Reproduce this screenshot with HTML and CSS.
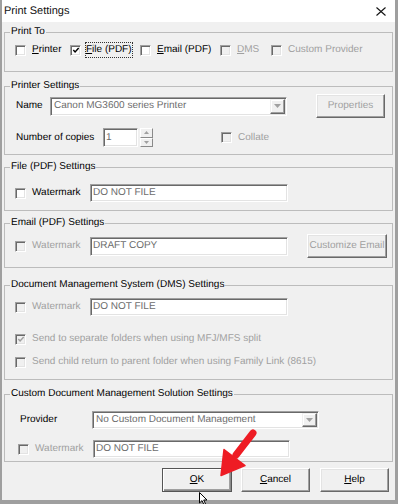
FILE: index.html
```html
<!DOCTYPE html>
<html>
<head>
<meta charset="utf-8">
<title>Print Settings</title>
<link rel="stylesheet" href="styles.css">
</head>
<body>
<div class="window">
  <div class="titlebar">
    <span class="title">Print Settings</span>
    <svg class="close" width="10" height="9" viewBox="0 0 10 9"><path d="M0.5 0.5 L9.5 8.5 M9.5 0.5 L0.5 8.5" stroke="#111" stroke-width="1.1" fill="none"/></svg>
  </div>

  <div class="content">
    <fieldset class="group g-printto">
      <legend>Print To</legend>
      <div class="row printto-row">
        <label class="check"><span class="cb"></span><span><u>P</u>rinter</span></label>
        <label class="check focus"><span class="cb"><svg class="tick" width="9" height="9" viewBox="0 0 9 9"><path d="M1.5 4 L3.5 6.2 L7.5 1.8" stroke="#000" stroke-width="1.6" fill="none"/></svg></span><span class="focus-rect"><u>F</u>ile (PDF)</span></label>
        <label class="check"><span class="cb"></span><span><u>E</u>mail (PDF)</span></label>
        <label class="check disabled"><span class="cb"></span><span><u>D</u>MS</span></label>
        <label class="check disabled"><span class="cb"></span><span>Custom Provider</span></label>
      </div>
    </fieldset>

    <fieldset class="group g-printer">
      <legend>Printer Settings</legend>
      <div class="row name-row">
        <span class="lbl name-lbl">Name</span>
        <div class="field select printer-select">
          <span class="select-text">Canon MG3600 series Printer</span>
          <span class="drop"><svg width="7" height="4" viewBox="0 0 7 4"><path d="M0 0 H7 L3.5 4 Z" fill="#a0a0a0"/></svg></span>
        </div>
        <span class="btn disabled props-btn">Properties</span>
      </div>
      <div class="row copies-row">
        <span class="lbl copies-lbl">Number of copies</span>
        <div class="field copies">1</div>
        <div class="spin">
          <span class="spin-btn"><svg width="5" height="3" viewBox="0 0 5 3"><path d="M0 3 H5 L2.5 0 Z" fill="#a0a0a0"/></svg></span>
          <span class="spin-btn"><svg width="5" height="3" viewBox="0 0 5 3"><path d="M0 0 H5 L2.5 3 Z" fill="#a0a0a0"/></svg></span>
        </div>
        <label class="check disabled collate"><span class="cb"></span><span>Collate</span></label>
      </div>
    </fieldset>

    <fieldset class="group g-file">
      <legend>File (PDF) Settings</legend>
      <div class="row wm-row">
        <label class="check wm-check"><span class="cb"></span><span>Watermark</span></label>
        <div class="field wm-field">DO NOT FILE</div>
      </div>
    </fieldset>

    <fieldset class="group g-email">
      <legend>Email (PDF) Settings</legend>
      <div class="row email-row">
        <label class="check disabled wm-check"><span class="cb"></span><span>Watermark</span></label>
        <div class="field wm-field email-field">DRAFT COPY</div>
        <span class="btn disabled customize-btn">Customize Email</span>
      </div>
    </fieldset>

    <fieldset class="group g-dms">
      <legend>Document Management System (DMS) Settings</legend>
      <div class="row wm-row dms-wm">
        <label class="check disabled wm-check"><span class="cb"></span><span>Watermark</span></label>
        <div class="field wm-field">DO NOT FILE</div>
      </div>
      <div class="row opt-row opt-first">
        <label class="check disabled"><span class="cb"><svg class="tick" width="9" height="9" viewBox="0 0 9 9"><path d="M1.5 4 L3.5 6.2 L7.5 1.8" stroke="#a0a0a0" stroke-width="1.6" fill="none"/></svg></span><span>Send to separate folders when using MFJ/MFS split</span></label>
      </div>
      <div class="row opt-row opt-second">
        <label class="check disabled"><span class="cb"></span><span>Send child return to parent folder when using Family Link (8615)</span></label>
      </div>
    </fieldset>

    <fieldset class="group g-custom">
      <legend>Custom Document Management Solution Settings</legend>
      <div class="row provider-row">
        <span class="lbl provider-lbl">Provider</span>
        <div class="field select provider-select">
          <span class="select-text">No Custom Document Management</span>
          <span class="drop"><svg width="7" height="4" viewBox="0 0 7 4"><path d="M0 0 H7 L3.5 4 Z" fill="#a0a0a0"/></svg></span>
        </div>
      </div>
      <div class="row custom-wm-row">
        <label class="check disabled wm-check"><span class="cb"></span><span>Watermark</span></label>
        <div class="field custom-wm-field">DO NOT FILE</div>
      </div>
    </fieldset>

    <div class="buttons">
      <span class="btn default ok-btn"><u>O</u>K</span>
      <span class="btn cancel-btn"><u>C</u>ancel</span>
      <span class="btn help-btn"><u>H</u>elp</span>
    </div>
  </div>

  <svg class="red-arrow" width="50" height="56" viewBox="0 0 50 56">
    <path d="M43 8 L26 30" stroke="#ee1c24" stroke-width="7" stroke-linecap="round" fill="none"/>
    <path d="M11 50.5 L14 24.6 L35 40.6 Z" fill="#ee1c24" stroke="#ee1c24" stroke-width="1.5" stroke-linejoin="round"/>
  </svg>
  <svg class="cursor" width="10" height="14" viewBox="0 0 10 14">
    <path d="M0.5 0.5 L0.5 11 L3 8.6 L4.9 12.6 L6.5 11.9 L4.7 8 L8 8 Z" fill="#fff" stroke="#000" stroke-width="1" stroke-linejoin="round"/>
  </svg>
</div>
</body>
</html>
```

FILE: styles.css
```css
* {
  box-sizing: border-box;
}

html,
body {
  margin: 0;
  padding: 0;
}

body {
  width: 398px;
  height: 504px;
  overflow: hidden;
  background: #9f9f9f;
  font-family: "Liberation Sans", Arial, sans-serif;
  font-size: 10px;
  line-height: 12px;
  color: #000;
  text-rendering: geometricPrecision;
}

.window {
  position: relative;
  margin: 0 3px 0 2px;
  height: 500px;
  background: #f0f0f0;
}

/* Title bar */
.titlebar {
  height: 22px;
  background: #fff;
  display: flex;
  align-items: center;
  justify-content: space-between;
  padding: 0 9px 0 2px;
}

.title {
  font-size: 11px;
  color: #111;
}

.close {
  display: block;
}

/* Content */
.content {
  padding: 4px 2px 8px 2px;
}

.group {
  margin: 0;
  padding: 0;
  min-width: 0;
  border: 1px solid #bcbcbc;
}

.group legend {
  margin-left: 5px;
  padding: 0 1px;
  line-height: 12px;
}

.g-printto { height: 46px; }
.g-printer { height: 75px; margin-top: 8px; }
.g-file    { height: 50px; margin-top: 6px; }
.g-email   { height: 51px; margin-top: 6px; }
.g-dms     { height: 101px; margin-top: 11px; }
.g-custom  { height: 74px; margin-top: 8px; }

.row {
  display: flex;
  align-items: center;
}

/* Checkboxes */
.check {
  display: flex;
  align-items: center;
  gap: 6px;
  white-space: nowrap;
}

.cb {
  width: 11px;
  height: 11px;
  flex: none;
  display: flex;
  align-items: center;
  justify-content: center;
  background: #fff;
  border: 1px solid;
  border-color: #a0a0a0 #fff #fff #a0a0a0;
  box-shadow: inset 1px 1px 0 #696969, inset -1px -1px 0 #e3e3e3;
}

.check.disabled {
  color: #a0a0a0;
}

.check.disabled .cb {
  background: #f0f0f0;
}

.tick {
  display: block;
  margin: 1px 0 0 1px;
}

.check.focus {
  gap: 4px;
}

.focus-rect {
  padding: 2px 1px;
  outline: 1px dotted #333;
  outline-offset: -1px;
}

/* Print To */
.printto-row {
  display: grid;
  grid-template-columns: 55px 70px 80px 51px auto;
  align-items: center;
  height: 16px;
  margin-top: 4px;
  padding-left: 10px;
}

/* Sunken fields */
.field {
  display: flex;
  align-items: center;
  background: #fff;
  border: 1px solid;
  border-color: #a0a0a0 #fff #fff #a0a0a0;
  box-shadow: inset 1px 1px 0 #696969, inset -1px -1px 0 #e3e3e3;
  color: #6d6d6d;
  padding: 0 2px;
  white-space: nowrap;
}

.select {
  justify-content: space-between;
  padding: 0 1px 0 3px;
}

.drop {
  width: 15px;
  height: 15px;
  display: flex;
  align-items: center;
  justify-content: center;
  background: #f0f0f0;
  border: 1px solid;
  border-color: #f0f0f0 #696969 #696969 #f0f0f0;
  box-shadow: inset -1px -1px 0 #a0a0a0, inset 1px 1px 0 #fff;
}

.lbl {
  white-space: nowrap;
  flex: none;
}

/* Buttons */
.btn {
  display: flex;
  align-items: center;
  justify-content: center;
  height: 24px;
  background: #f0f0f0;
  border: 1px solid;
  border-color: #fff #696969 #696969 #fff;
  box-shadow: inset -1px -1px 0 #a0a0a0, inset 1px 1px 0 #e3e3e3;
  white-space: nowrap;
}

.btn.disabled {
  color: #a0a0a0;
}

.btn.default {
  border-color: #555;
  box-shadow: inset 1px 1px 0 #fff, inset -1px -1px 0 #8a8a8a, inset -2px -2px 0 #a0a0a0;
}

/* Printer Settings */
.name-row {
  height: 24px;
  margin-top: 2px;
  padding-left: 11px;
}

.name-lbl {
  width: 34px;
}

.printer-select {
  width: 237px;
  height: 19px;
}

.props-btn {
  width: 69px;
  margin-left: 29px;
}

.copies-row {
  height: 19px;
  margin-top: 10px;
  padding-left: 11px;
}

.copies-lbl {
  width: 87px;
}

.copies {
  width: 35px;
  height: 19px;
}

.spin {
  width: 13px;
  height: 19px;
  margin-left: 2px;
  display: flex;
  flex-direction: column;
}

.spin-btn {
  flex: 1;
  display: flex;
  align-items: center;
  justify-content: center;
  background: #f0f0f0;
  border: 1px solid;
  border-color: #fff #8a8a8a #8a8a8a #fff;
}

.collate {
  margin-left: 68px;
}

/* Watermark rows */
.wm-row {
  height: 18px;
  margin-top: 11px;
  padding-left: 10px;
}

.wm-check {
  width: 75px;
}

.wm-field {
  width: 198px;
  height: 18px;
}

.email-row {
  height: 24px;
  margin-top: 5px;
  padding-left: 10px;
}

.email-field {
  height: 19px;
}

.customize-btn {
  width: 80px;
  margin-left: 19px;
}

/* DMS */
.dms-wm {
  margin-top: 7px;
}

.opt-row {
  height: 16px;
  padding-left: 10px;
}

.opt-first {
  margin-top: 15px;
}

.opt-second {
  margin-top: 7px;
}

/* Custom */
.provider-row {
  height: 18px;
  margin-top: 11px;
  padding-left: 15px;
}

.provider-lbl {
  width: 72px;
}

.provider-select {
  width: 227px;
  height: 18px;
}

.provider-select .drop {
  height: 14px;
}

.custom-wm-row {
  height: 18px;
  margin-top: 11px;
  padding-left: 13px;
}

.custom-wm-field {
  width: 197px;
  height: 18px;
}

/* Bottom buttons */
.buttons {
  display: flex;
  justify-content: flex-end;
  margin-top: 6px;
  padding-right: 4px;
}

.ok-btn { width: 70px; }
.cancel-btn { width: 69px; margin-left: 9px; }
.help-btn { width: 69px; margin-left: 10px; }

/* Overlays */
.red-arrow {
  position: absolute;
  left: 208px;
  top: 425px;
}

.cursor {
  position: absolute;
  left: 197px;
  top: 492px;
}
```
